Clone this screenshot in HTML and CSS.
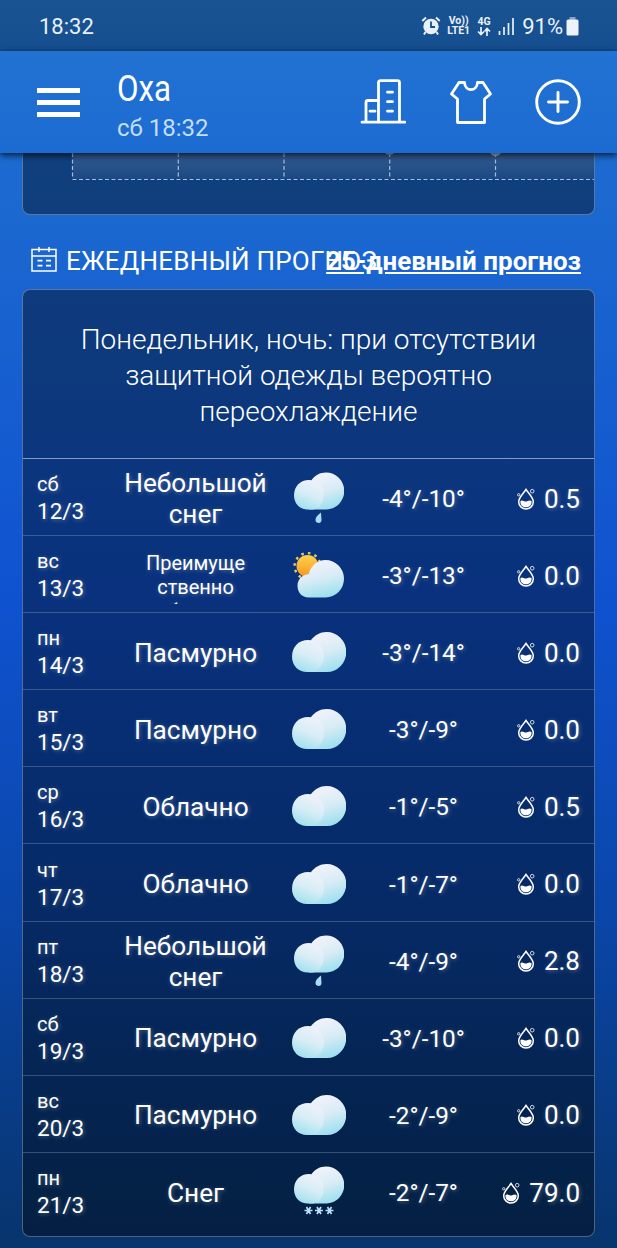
FILE: index.html
```
<!DOCTYPE html>
<html lang="ru">
<head>
  <meta charset="UTF-8">
  <meta name="viewport" content="width=device-width, initial-scale=1.0">
  <title>Оха - прогноз погоды</title>
  <link rel="stylesheet" href="styles.css">
</head>
<body>

<!-- shared icons -->
<svg class="defs" width="0" height="0">
  <defs>
    <linearGradient id="cloudBack" x1="0.3" y1="0" x2="0.6" y2="1">
      <stop offset="0" stop-color="#f3f3fb"/>
      <stop offset="0.5" stop-color="#d8ecf6"/>
      <stop offset="1" stop-color="#9bdfee"/>
    </linearGradient>
    <linearGradient id="cloudFront" x1="0.7" y1="0" x2="0.3" y2="1">
      <stop offset="0" stop-color="#f0f1fa"/>
      <stop offset="0.5" stop-color="#d7edf6"/>
      <stop offset="1" stop-color="#9fe0ee"/>
    </linearGradient>
    <linearGradient id="sun" x1="0" y1="0" x2="0" y2="1">
      <stop offset="0" stop-color="#fdd44c"/>
      <stop offset="1" stop-color="#f7951e"/>
    </linearGradient>
    <symbol id="cloud" viewBox="0 0 54 41">
      <path d="M19 8.500 C23 3.500 28 0.500 34.500 0.500 A19.500 20 0 0 1 35 40.500 L16 40.500 Z" fill="url(#cloudBack)"/>
      <path d="M16 8.500 C25 8.500 32 15 32 24.500 C32 32 28 38 21 40.500 L15 40.500 C6 40.500 0 34 0 25 C0 15 7 8.500 16 8.500 Z" fill="url(#cloudFront)"/>
    </symbol>
    <symbol id="overcast" viewBox="0 0 56 56">
      <use href="#cloud" x="1" y="7.500" width="54" height="41"/>
    </symbol>
    <symbol id="drizzle" viewBox="0 0 56 56">
      <use href="#cloud" x="3" y="2" width="50" height="38"/>
      <path d="M30 42.500 C27 45 24.500 47 24.500 49.800 A3 3 0 0 0 30.500 50 C30.500 47.500 30 45 30 42.500 Z" fill="#a9dcf5"/>
    </symbol>
    <symbol id="snow" viewBox="0 0 56 56">
      <use href="#cloud" x="3" y="2" width="50" height="38"/>
      <g stroke="#b9e0fa" stroke-width="1.700">
        <path d="M13.500 46.500h8M15.500 43l4 7M19.500 43l-4 7M24 46.500h8M26 43l4 7M30 43l-4 7M34.500 46.500h8M36.500 43l4 7M40.500 43l-4 7"/>
      </g>
    </symbol>
    <symbol id="partly" viewBox="0 0 56 56">
      <circle cx="16.500" cy="19" r="12.900" fill="none" stroke="#e9c878" stroke-width="2.400" stroke-dasharray="2.600 4.154"/>
      <circle cx="16.500" cy="19" r="11" fill="url(#sun)"/>
      <path d="M17.500 27.300 C20 18.500 26.500 13 34.500 13 A18.500 18.750 0 0 1 34.500 50.500 L17.500 50.500 C11 50.500 6.500 45.500 6.500 39 C6.500 32.500 11 27.700 17.500 27.300 Z" fill="url(#cloudBack)"/>
    </symbol>
    <symbol id="drop" viewBox="0 0 18 22">
      <path d="M9 1.500 C6.500 5.500 1.700 9.500 1.700 13.700 A7.300 7.300 0 0 0 16.300 13.700 C16.300 9.500 11.500 5.500 9 1.500 Z" fill="none" stroke="#fff" stroke-width="1.500"/>
      <path d="M3.500 13 C5.500 11.200 7.500 14.300 10 13.300 C12 12.500 13 12 14.500 13 C15 17 12.300 19.300 9 19.300 C5.700 19.300 3 17 3.500 13 Z" fill="#fff"/>
      <circle cx="1.700" cy="6.800" r="1.200" fill="none" stroke="#fff" stroke-width="0.800"/>
      <circle cx="15.200" cy="3.200" r="1.800" fill="none" stroke="#fff" stroke-width="0.800"/>
    </symbol>
  </defs>
</svg>

<div class="status-bar">
  <span class="clock">18:32</span>
  <div class="status-icons">
    <svg class="alarm" width="20" height="20" viewBox="0 0 20 20">
      <circle cx="10" cy="10.500" r="7.700" fill="#e8f1fa"/>
      <path d="M1.300 5 L5 1.500 M18.700 5 L15 1.500 M4.500 16 L3 18.500 M15.500 16 L17 18.500" stroke="#e8f1fa" stroke-width="2"/>
      <path d="M10 5.500v5.500h4" stroke="#17508f" stroke-width="1.800" fill="none"/>
    </svg>
    <div class="net volte"><span>Vo))</span><span>LTE1</span></div>
    <div class="net lte">
      <span>4G</span>
      <svg width="14" height="9" viewBox="0 0 14 9"><path d="M4 0v7M1 4.500L4 7.500L7 4.500M10 9V2M7.500 4.500L10 1.500L13 4.500" fill="none" stroke="#e8f1fa" stroke-width="1.700"/></svg>
    </div>
    <svg class="signal" width="17" height="18" viewBox="0 0 17 18">
      <path d="M1.500 14v4M6 10v8M10.500 6v12M15 1v17" stroke="#e8f1fa" stroke-width="1.700"/>
    </svg>
    <span class="percent">91%</span>
    <svg class="battery" width="13" height="19" viewBox="0 0 13 19">
      <path d="M3.500 0h6v3h-6z" fill="#7fa3cb"/>
      <rect x="0.500" y="2.500" width="12" height="16" rx="1.500" fill="#eef3fb"/>
    </svg>
  </div>
</div>

<header class="header">
  <div class="menu-btn"><i></i><i></i><i></i></div>
  <div class="place">
    <div class="city">Оха</div>
    <div class="time">сб 18:32</div>
  </div>
  <div class="actions">
    <svg width="46" height="46" viewBox="0 0 46 46" fill="none" stroke="#fff" stroke-width="2.800" stroke-linecap="round" stroke-linejoin="round">
      <path d="M2 43.200h43M6 43V23.500q0-2 2-2H18M18.500 43V3.700q0-2 2-2H37.500q2 0 2 2V43M27.500 13.200h5M27.500 22.700h5M27.500 32.200h5M10 32.200h5"/>
    </svg>
    <svg width="46" height="46" viewBox="0 0 46 46" fill="none" stroke="#fff" stroke-width="2.800" stroke-linejoin="round">
      <path d="M11 3.500H16.500C17 13 29 13 29.500 3.500H35L42.500 15L36.500 20V43.500H9.500V20L3.500 15Z"/>
    </svg>
    <svg width="46" height="46" viewBox="0 0 46 46" fill="none" stroke="#fff" stroke-width="2.900" stroke-linecap="round">
      <circle cx="23" cy="23" r="21.300"/>
      <path d="M23 13.500v19M13.500 23h19"/>
    </svg>
  </div>
</header>

<main class="content">
  <section class="card chart">
    <svg width="571" height="61" viewBox="0 0 571 61">
      <defs>
        <linearGradient id="area" x1="0" y1="0" x2="0" y2="1">
          <stop offset="0" stop-color="#fff" stop-opacity="0.140"/>
          <stop offset="1" stop-color="#fff" stop-opacity="0.050"/>
        </linearGradient>
      </defs>
      <path d="M49.500 0H571V26H49.500z" fill="url(#area)"/>
      <path d="M49.500 0V26M155.300 0V26M261 0V26M366.700 0V26M472.500 0V26M49.500 26.500H571" fill="none" stroke="#a3bfe3" stroke-width="1.200" stroke-dasharray="4 2.500"/>
      <path d="M362 0h9l-2 1.500h-5zM467 0h11q-2 3-5.500 3t-5.500-3z" fill="#a9bdd9"/>
    </svg>
  </section>

  <div class="section-title">
    <svg width="26" height="26" viewBox="0 0 26 26" fill="none" stroke="#fff" stroke-width="1.500">
      <path d="M1 3.500H25V25H1zM1 10h24M8 1v5M18 1v5" />
      <path d="M6.500 14.700h5M15 14.700h5M6.500 19.700h5M15 19.700h5" stroke-width="1.700"/>
    </svg>
    <h2>ЕЖЕДНЕВНЫЙ ПРОГНОЗ</h2>
    <a href="#">25-дневный прогноз</a>
  </div>

  <section class="card forecast">
    <p class="notice">Понедельник, ночь: при отсутствии<br>защитной одежды вероятно<br>переохлаждение</p>
    <div class="row">
      <div class="day">сб<b>12/3</b></div>
      <div class="cond">Небольшой снег</div>
      <svg class="icon"><use href="#drizzle"/></svg>
      <div class="temp">-4°/-10°</div>
      <div class="rain"><svg><use href="#drop"/></svg>0.5</div>
    </div>
    <div class="row">
      <div class="day">вс<b>13/3</b></div>
      <div class="cond small">Преимуще<br>ственно<br>облачно</div>
      <svg class="icon"><use href="#partly"/></svg>
      <div class="temp">-3°/-13°</div>
      <div class="rain"><svg><use href="#drop"/></svg>0.0</div>
    </div>
    <div class="row">
      <div class="day">пн<b>14/3</b></div>
      <div class="cond">Пасмурно</div>
      <svg class="icon"><use href="#overcast"/></svg>
      <div class="temp">-3°/-14°</div>
      <div class="rain"><svg><use href="#drop"/></svg>0.0</div>
    </div>
    <div class="row">
      <div class="day">вт<b>15/3</b></div>
      <div class="cond">Пасмурно</div>
      <svg class="icon"><use href="#overcast"/></svg>
      <div class="temp">-3°/-9°</div>
      <div class="rain"><svg><use href="#drop"/></svg>0.0</div>
    </div>
    <div class="row">
      <div class="day">ср<b>16/3</b></div>
      <div class="cond">Облачно</div>
      <svg class="icon"><use href="#overcast"/></svg>
      <div class="temp">-1°/-5°</div>
      <div class="rain"><svg><use href="#drop"/></svg>0.5</div>
    </div>
    <div class="row">
      <div class="day">чт<b>17/3</b></div>
      <div class="cond">Облачно</div>
      <svg class="icon"><use href="#overcast"/></svg>
      <div class="temp">-1°/-7°</div>
      <div class="rain"><svg><use href="#drop"/></svg>0.0</div>
    </div>
    <div class="row">
      <div class="day">пт<b>18/3</b></div>
      <div class="cond">Небольшой снег</div>
      <svg class="icon"><use href="#drizzle"/></svg>
      <div class="temp">-4°/-9°</div>
      <div class="rain"><svg><use href="#drop"/></svg>2.8</div>
    </div>
    <div class="row">
      <div class="day">сб<b>19/3</b></div>
      <div class="cond">Пасмурно</div>
      <svg class="icon"><use href="#overcast"/></svg>
      <div class="temp">-3°/-10°</div>
      <div class="rain"><svg><use href="#drop"/></svg>0.0</div>
    </div>
    <div class="row">
      <div class="day">вс<b>20/3</b></div>
      <div class="cond">Пасмурно</div>
      <svg class="icon"><use href="#overcast"/></svg>
      <div class="temp">-2°/-9°</div>
      <div class="rain"><svg><use href="#drop"/></svg>0.0</div>
    </div>
    <div class="row">
      <div class="day">пн<b>21/3</b></div>
      <div class="cond">Снег</div>
      <svg class="icon"><use href="#snow"/></svg>
      <div class="temp">-2°/-7°</div>
      <div class="rain"><svg><use href="#drop"/></svg>79.0</div>
    </div>
  </section>
</main>

</body>
</html>
```
FILE: styles.css
```
* {
  box-sizing: border-box;
}

body {
  margin: 0;
  height: 1248px;
  overflow: hidden;
  font-family: Roboto, "Noto Sans", sans-serif;
  color: #fff;
  background: linear-gradient(#1c6bd2 153px, #1b67d0 230px, #0f52d0 600px, #0a46a8 920px, #07346c 1248px);
}

.defs {
  position: absolute;
}

/* top bars */
.status-bar {
  display: flex;
  justify-content: space-between;
  align-items: center;
  height: 51px;
  padding: 1px 38px 0 39px;
  background: linear-gradient(#195391, #164f90);
  color: #e8f1fa;
  font-size: 22px;
}

.status-icons {
  display: flex;
  align-items: center;
}

.net {
  display: flex;
  flex-direction: column;
  align-items: center;
  font-size: 10.500px;
  font-weight: 700;
  line-height: 10px;
}

.volte {
  margin-left: 6px;
  width: 23px;
}

.lte {
  margin: 0 7px;
  width: 14px;
}

.signal {
  margin-right: 7px;
}

.battery {
  margin-left: 3px;
}

.header {
  position: relative;
  display: flex;
  align-items: center;
  height: 102px;
  padding: 0 36px 0 37px;
  background: linear-gradient(#2272d3, #1c6bd2);
  box-shadow: 0 2px 7px rgba(0, 0, 0, 0.8);
}

.menu-btn {
  display: flex;
  flex-direction: column;
  gap: 7px;
  width: 43px;
}

.menu-btn i {
  height: 5px;
  background: #fff;
}

.place {
  margin-left: 37px;
  padding-top: 10px;
}

.city {
  font-size: 36px;
  line-height: 42px;
  transform: scaleX(0.870);
  transform-origin: left;
}

.time {
  font-size: 24px;
  line-height: 37px;
  color: #c3def8;
}

.actions {
  display: flex;
  gap: 41.500px;
  margin-left: auto;
}

/* page */
.content {
  padding: 0 22px;
}

.card {
  border: 1px solid rgba(255, 255, 255, 0.300);
  border-radius: 8px;
  background: rgba(0, 0, 0, 0.400);
}

.chart {
  height: 62px;
  border-top: 0;
  border-radius: 0 0 8px 8px;
}

.chart svg {
  display: block;
}

.section-title {
  display: flex;
  align-items: center;
  height: 74px;
  padding: 17px 14px 0 9px;
}

.section-title svg {
  flex: none;
  margin-top: -4px;
}

.section-title h2 {
  width: 240px;
  margin: 0 0 0 9px;
  font-size: 26px;
  font-weight: 400;
  letter-spacing: 0.200px;
  white-space: nowrap;
}

.section-title a {
  margin-left: auto;
  color: #fff;
  font-size: 26px;
  font-weight: 700;
  white-space: nowrap;
}

.notice {
  height: 169px;
  margin: 0;
  padding-top: 32px;
  border-bottom: 1px solid rgba(255, 255, 255, 0.500);
  font-size: 28px;
  font-weight: 300;
  line-height: 36px;
  text-align: center;
}

.row {
  display: grid;
  grid-template-columns: 83px 151px 95px 115px 1fr;
  align-items: center;
  height: 77.100px;
  padding: 2px 14px 0;
  border-bottom: 1px solid rgba(255, 255, 255, 0.200);
  text-shadow: 1px 1px 4px rgba(255, 255, 255, 0.300);
}

.row:last-child {
  height: 83px;
  padding-bottom: 6px;
  border-bottom: 0;
}

.day {
  font-size: 20px;
  line-height: 27px;
}

.day b {
  display: block;
  font-size: 22.500px;
  font-weight: 400;
}

.cond {
  max-height: 68px;
  padding-top: 2px;
  overflow: hidden;
  font-size: 26.200px;
  line-height: 31px;
  text-align: center;
}

.cond.small {
  height: 58px;
  padding-top: 5px;
  font-size: 20px;
  line-height: 24px;
}

.icon {
  width: 56px;
  height: 56px;
  justify-self: center;
}

.temp {
  padding-top: 1px;
  font-size: 24.300px;
  text-align: center;
}

.rain {
  display: flex;
  justify-content: flex-end;
  align-items: center;
  padding-top: 1px;
  font-size: 26px;
}

.rain svg {
  width: 18px;
  height: 22px;
  margin-right: 9px;
}
```
